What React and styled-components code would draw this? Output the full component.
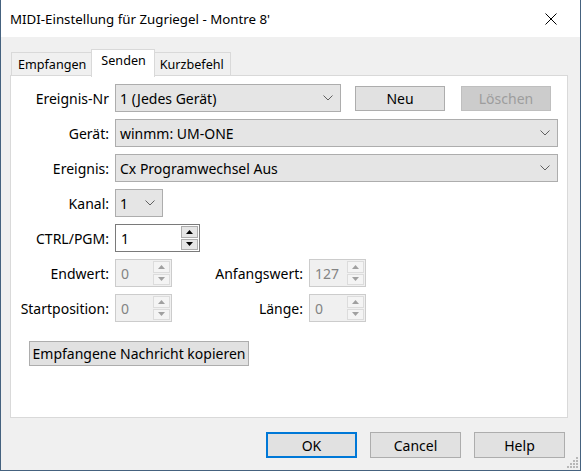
import React from "react";
import { styled, createGlobalStyle } from "styled-components";

const GlobalStyle = createGlobalStyle`
  html, body {
    margin: 0;
    padding: 0;
    background: #ffffff;
  }
  body {
    font-family: "Noto Sans", "Open Sans", sans-serif;
    font-size: 14px;
    color: #000;
  }
  * {
    box-sizing: border-box;
  }
`;

const Frame = styled.div`
  position: relative;
  width: 581px;
  height: 471px;
`;

const Window = styled.div`
  width: 581px;
  height: 471px;
  border: 1px solid #45627f;
  border-top: none;
  display: flex;
  flex-direction: column;
  background: #f0f0f0;
`;

const TitleBar = styled.div`
  height: 37px;
  background: #ffffff;
  display: flex;
  align-items: center;
  justify-content: space-between;
  padding: 0 23px 0 9px;
  font-size: 13.3px;
`;

const Body = styled.div`
  flex: 1;
  padding: 11px 12px 0 9px;
  display: flex;
  flex-direction: column;
`;

const TabStrip = styled.div`
  display: flex;
  align-items: flex-end;
  padding-left: 1px;
  height: 28px;
  position: relative;
  z-index: 1;
  font-size: 12.6px;
`;

const Tab = styled.div`
  height: ${(p) => (p.$active ? "28px" : "24px")};
  margin: ${(p) => (p.$active ? "0 -2px -1px -2px" : "0")};
  padding: ${(p) => (p.$active ? "2px 8px 0 9px" : "0 6px 0 6px")};
  background: ${(p) => (p.$active ? "#ffffff" : "#f0f0f0")};
  border: 1px solid #d9d9d9;
  border-bottom: ${(p) => (p.$active ? "none" : "1px solid #d9d9d9")};
  display: flex;
  align-items: ${(p) => (p.$active ? "flex-start" : "center")};
  position: relative;
  z-index: ${(p) => (p.$active ? 2 : 1)};
`;

const Panel = styled.div`
  height: 343px;
  margin-top: -1px;
  background: #ffffff;
  border: 1px solid #d9d9d9;
  padding: 8px 0 0 4px;
  display: flex;
  flex-direction: column;
  gap: 7px;
`;

const Row = styled.div`
  display: flex;
  align-items: center;
  gap: 6px;
`;

const Label = styled.div`
  width: 94px;
  text-align: right;
  white-space: nowrap;
`;

const Combo = styled.div`
  width: ${(p) => p.$w}px;
  height: 28px;
  background: #e5e5e5;
  border: 1px solid #adadad;
  display: flex;
  align-items: center;
  justify-content: space-between;
  padding: 0 7px 0 4px;
  white-space: nowrap;
`;

const Chevron = () => (
  <svg width="10" height="6" viewBox="0 0 10 6">
    <path d="M0.5 0.5 L5 5 L9.5 0.5" fill="none" stroke="#606060" strokeWidth="1" />
  </svg>
);

const Button = styled.div`
  width: ${(p) => p.$w || 90}px;
  height: ${(p) => p.$h || 25}px;
  background: ${(p) => (p.$disabled ? "#cccccc" : "#e1e1e1")};
  border: 1px solid ${(p) => (p.$default ? "#0078d7" : p.$disabled ? "#bfbfbf" : "#adadad")};
  box-shadow: ${(p) => (p.$default ? "inset 0 0 0 1px #0078d7" : "none")};
  color: ${(p) => (p.$disabled ? "#9d9d9d" : "#000")};
  display: flex;
  align-items: center;
  justify-content: center;
  white-space: nowrap;
`;

const ButtonGroup = styled.div`
  display: flex;
  gap: 16px;
  margin-left: 8px;
`;

const Spin = styled.div`
  width: ${(p) => p.$w}px;
  height: 28px;
  display: flex;
  border: 1px solid ${(p) => (p.$disabled ? "#cccccc" : "#7a7a7a")};
  background: ${(p) => (p.$disabled ? "#f0f0f0" : "#ffffff")};
`;

const SpinValue = styled.div`
  flex: 1;
  display: flex;
  align-items: center;
  padding-left: 5px;
  color: ${(p) => (p.$disabled ? "#838383" : "#000")};
`;

const SpinButtons = styled.div`
  width: 18px;
  display: flex;
  flex-direction: column;
  gap: 1px;
  padding: 1px 1px 1px 0;
`;

const SpinButton = styled.div`
  flex: 1;
  background: ${(p) => (p.$disabled ? "#f4f4f4" : "#e5e5e5")};
  border: 1px solid ${(p) => (p.$disabled ? "#dcdcdc" : "#adadad")};
  display: flex;
  align-items: center;
  justify-content: center;
`;

const Arrow = ({ up, disabled }) => (
  <svg width="7" height="4" viewBox="0 0 7 4">
    <path d={up ? "M0 4 L3.5 0 L7 4 Z" : "M0 0 L3.5 4 L7 0 Z"} fill={disabled ? "#a0a0a0" : "#000"} />
  </svg>
);

const SpinBox = ({ w, value, disabled }) => (
  <Spin $w={w} $disabled={disabled}>
    <SpinValue $disabled={disabled}>{value}</SpinValue>
    <SpinButtons>
      <SpinButton $disabled={disabled}>
        <Arrow up disabled={disabled} />
      </SpinButton>
      <SpinButton $disabled={disabled}>
        <Arrow disabled={disabled} />
      </SpinButton>
    </SpinButtons>
  </Spin>
);

const PairLabel = styled.div`
  width: 125px;
  text-align: right;
  white-space: nowrap;
`;

const CopyRow = styled.div`
  margin: 12px 0 0 14px;
`;

const Footer = styled.div`
  display: flex;
  justify-content: flex-end;
  gap: 13px;
  padding: 14px 3px 0 0;
`;

const Grip = styled.svg`
  position: absolute;
  right: 2px;
  bottom: 2px;
`;

const CloseIcon = () => (
  <svg width="12" height="12" viewBox="0 0 12 12">
    <path d="M0.5 0.5 L11.5 11.5 M11.5 0.5 L0.5 11.5" stroke="#000" strokeWidth="1" />
  </svg>
);

const gripDots = [[9, 0], [6, 3], [9, 3], [3, 6], [6, 6], [9, 6], [0, 9], [3, 9], [6, 9], [9, 9]];

export default function App() {
  return (
    <>
      <GlobalStyle />
      <Frame>
        <Window>
          <TitleBar>
            <span>MIDI-Einstellung für Zugriegel - Montre 8'</span>
            <CloseIcon />
          </TitleBar>
          <Body>
            <TabStrip>
              <Tab>Empfangen</Tab>
              <Tab $active>Senden</Tab>
              <Tab>Kurzbefehl</Tab>
            </TabStrip>
            <Panel>
              <Row>
                <Label>Ereignis-Nr</Label>
                <Combo $w={226}>
                  <span>1 (Jedes Gerät)</span>
                  <Chevron />
                </Combo>
                <ButtonGroup>
                  <Button>Neu</Button>
                  <Button $disabled>Löschen</Button>
                </ButtonGroup>
              </Row>
              <Row>
                <Label>Gerät:</Label>
                <Combo $w={443}>
                  <span>winmm: UM-ONE</span>
                  <Chevron />
                </Combo>
              </Row>
              <Row>
                <Label>Ereignis:</Label>
                <Combo $w={443}>
                  <span>Cx Programwechsel Aus</span>
                  <Chevron />
                </Combo>
              </Row>
              <Row>
                <Label>Kanal:</Label>
                <Combo $w={48}>
                  <span>1</span>
                  <Chevron />
                </Combo>
              </Row>
              <Row>
                <Label>CTRL/PGM:</Label>
                <SpinBox w={85} value="1" />
              </Row>
              <Row>
                <Label>Endwert:</Label>
                <SpinBox w={57} value="0" disabled />
                <PairLabel>Anfangswert:</PairLabel>
                <SpinBox w={57} value="127" disabled />
              </Row>
              <Row>
                <Label>Startposition:</Label>
                <SpinBox w={57} value="0" disabled />
                <PairLabel>Länge:</PairLabel>
                <SpinBox w={57} value="0" disabled />
              </Row>
              <CopyRow>
                <Button $w={220}>Empfangene Nachricht kopieren</Button>
              </CopyRow>
            </Panel>
            <Footer>
              <Button $w={91} $h={26} $default>OK</Button>
              <Button $w={91} $h={26}>Cancel</Button>
              <Button $w={91} $h={26}>Help</Button>
            </Footer>
          </Body>
        </Window>
        <Grip width="12" height="12" viewBox="0 0 12 12">
          {gripDots.map(([x, y]) => (
            <rect key={`${x}-${y}`} x={x} y={y} width="2" height="2" fill="#b8b8b8" />
          ))}
        </Grip>
      </Frame>
    </>
  );
}
